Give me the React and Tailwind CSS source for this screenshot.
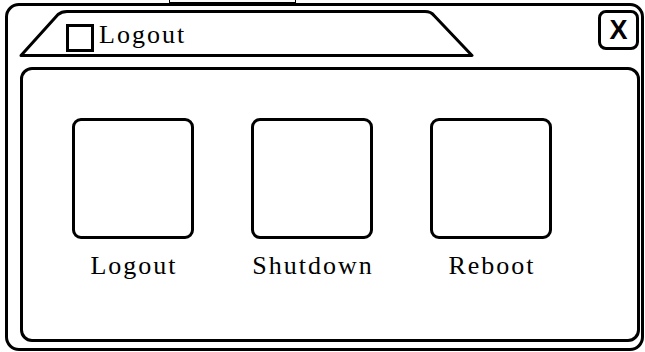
import React from "react";

export default function App() {
  const actions = ["Logout", "Shutdown", "Reboot"];

  return (
    <div className="w-[645px] h-[352px] bg-white overflow-hidden text-black font-['Liberation_Serif',serif]">
      {/* cut-off edge of the window above */}
      <div className="h-[3px] pl-[169px]">
        <div className="w-[127px] h-[3px] border-x border-b border-black" />
      </div>

      <div className="ml-[5px] w-[639px] h-[348px] border-[3px] border-black rounded-[14px] flex flex-col">
        {/* header: tab + close */}
        <div className="flex justify-between items-start h-[61px]">
          <div className="relative ml-[11px] mt-[3px] w-[456px] h-[49px] flex items-center pl-[47px] pt-[2px]">
            <svg
              className="absolute inset-0"
              width="456"
              height="49"
              viewBox="0 0 456 49"
              fill="none"
            >
              <path
                d="M2 46.5 L39 5.5 Q42.5 2.5 48 2.5 L406 2.5 Q412 2.5 415 6.5 L453 46.5 Z"
                fill="white"
                stroke="black"
                strokeWidth="3"
                strokeLinejoin="round"
              />
            </svg>
            <span className="relative mt-[6px] w-[28px] h-[28px] border-[3px] border-black" />
            <span className="relative ml-[5px] mt-[1px] text-[26px] leading-[28px] tracking-[2px]">
              Logout
            </span>
          </div>
          <div className="mt-[4px] mr-[2px] w-[41px] h-[40px] border-[3px] border-black rounded-[8px] flex items-center justify-center font-['Liberation_Sans',sans-serif] font-bold text-[27px] leading-none">
            X
          </div>
        </div>

        {/* body */}
        <div className="ml-[12px] mr-[1px] mb-[6px] flex-1 border-[3px] border-black rounded-[12px] pt-[48px] pl-[49px] flex items-start gap-[57px]">
          {actions.map((a) => (
            <div key={a} className="w-[122px] flex flex-col items-center">
              <div className="w-[122px] h-[121px] border-[3px] border-black rounded-[9px]" />
              <span className="mt-[12px] pl-[2px] text-[26px] leading-[30px] tracking-[2px] whitespace-nowrap">
                {a}
              </span>
            </div>
          ))}
        </div>
      </div>
    </div>
  );
}
